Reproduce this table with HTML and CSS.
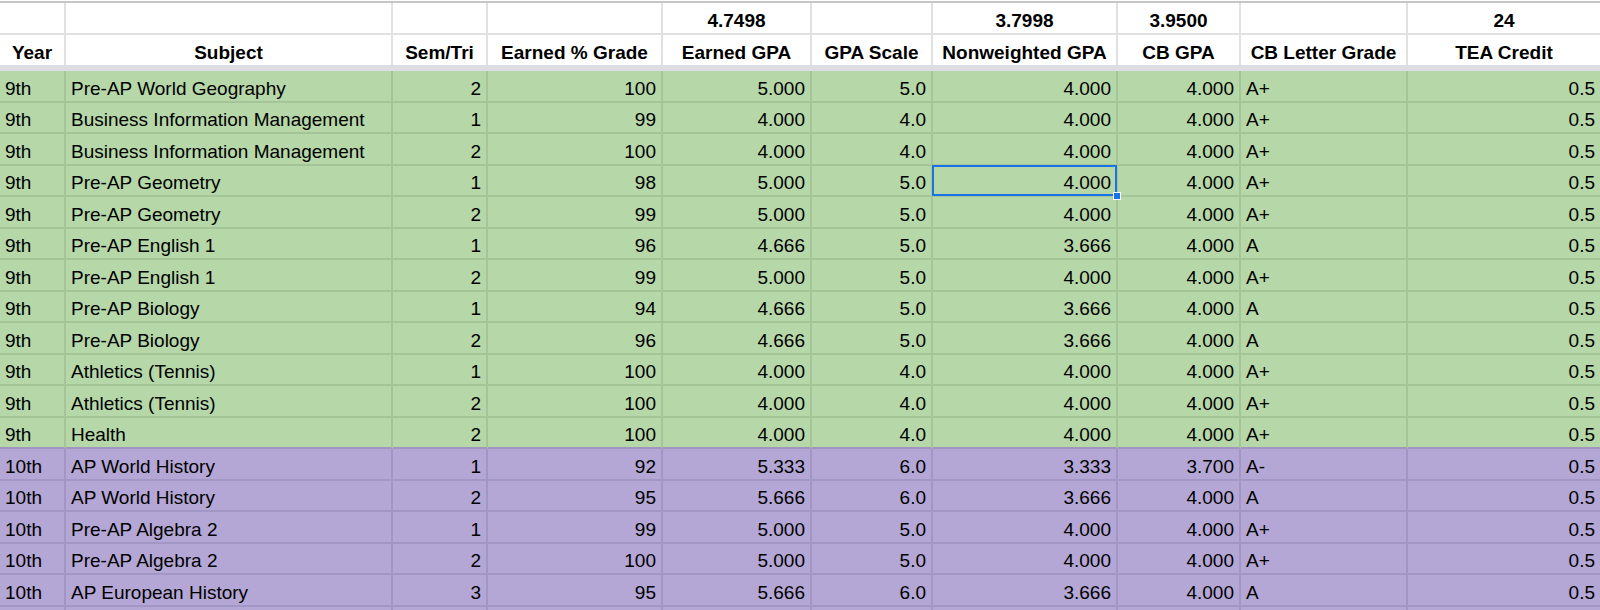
FILE: index.html
```html
<!DOCTYPE html>
<html lang="en">
<head>
<meta charset="utf-8">
<title>GPA Sheet</title>
<link rel="stylesheet" href="styles.css">
</head>
<body>
<div class="sheet">
  <div class="row hdr hdr-a">
    <div class="c"></div><div class="c"></div><div class="c"></div><div class="c"></div>
    <div class="c ctr">4.7498</div><div class="c"></div>
    <div class="c ctr">3.7998</div><div class="c ctr">3.9500</div><div class="c"></div>
    <div class="c ctr">24</div>
  </div>
  <div class="row hdr hdr-b">
    <div class="c ctr">Year</div><div class="c ctr">Subject</div><div class="c ctr">Sem/Tri</div>
    <div class="c ctr">Earned % Grade</div><div class="c ctr">Earned GPA</div><div class="c ctr">GPA Scale</div>
    <div class="c ctr">Nonweighted GPA</div><div class="c ctr">CB GPA</div><div class="c ctr">CB Letter Grade</div>
    <div class="c ctr">TEA Credit</div>
  </div>
  <div class="freeze"></div>

  <div class="row g"><div class="c">9th</div><div class="c">Pre-AP World Geography</div><div class="c r">2</div><div class="c r">100</div><div class="c r">5.000</div><div class="c r">5.0</div><div class="c r">4.000</div><div class="c r">4.000</div><div class="c">A+</div><div class="c r">0.5</div></div>
  <div class="row g"><div class="c">9th</div><div class="c">Business Information Management</div><div class="c r">1</div><div class="c r">99</div><div class="c r">4.000</div><div class="c r">4.0</div><div class="c r">4.000</div><div class="c r">4.000</div><div class="c">A+</div><div class="c r">0.5</div></div>
  <div class="row g"><div class="c">9th</div><div class="c">Business Information Management</div><div class="c r">2</div><div class="c r">100</div><div class="c r">4.000</div><div class="c r">4.0</div><div class="c r">4.000</div><div class="c r">4.000</div><div class="c">A+</div><div class="c r">0.5</div></div>
  <div class="row g"><div class="c">9th</div><div class="c">Pre-AP Geometry</div><div class="c r">1</div><div class="c r">98</div><div class="c r">5.000</div><div class="c r">5.0</div><div class="c r sel">4.000<span class="handle"></span></div><div class="c r">4.000</div><div class="c">A+</div><div class="c r">0.5</div></div>
  <div class="row g"><div class="c">9th</div><div class="c">Pre-AP Geometry</div><div class="c r">2</div><div class="c r">99</div><div class="c r">5.000</div><div class="c r">5.0</div><div class="c r">4.000</div><div class="c r">4.000</div><div class="c">A+</div><div class="c r">0.5</div></div>
  <div class="row g"><div class="c">9th</div><div class="c">Pre-AP English 1</div><div class="c r">1</div><div class="c r">96</div><div class="c r">4.666</div><div class="c r">5.0</div><div class="c r">3.666</div><div class="c r">4.000</div><div class="c">A</div><div class="c r">0.5</div></div>
  <div class="row g"><div class="c">9th</div><div class="c">Pre-AP English 1</div><div class="c r">2</div><div class="c r">99</div><div class="c r">5.000</div><div class="c r">5.0</div><div class="c r">4.000</div><div class="c r">4.000</div><div class="c">A+</div><div class="c r">0.5</div></div>
  <div class="row g"><div class="c">9th</div><div class="c">Pre-AP Biology</div><div class="c r">1</div><div class="c r">94</div><div class="c r">4.666</div><div class="c r">5.0</div><div class="c r">3.666</div><div class="c r">4.000</div><div class="c">A</div><div class="c r">0.5</div></div>
  <div class="row g"><div class="c">9th</div><div class="c">Pre-AP Biology</div><div class="c r">2</div><div class="c r">96</div><div class="c r">4.666</div><div class="c r">5.0</div><div class="c r">3.666</div><div class="c r">4.000</div><div class="c">A</div><div class="c r">0.5</div></div>
  <div class="row g"><div class="c">9th</div><div class="c">Athletics (Tennis)</div><div class="c r">1</div><div class="c r">100</div><div class="c r">4.000</div><div class="c r">4.0</div><div class="c r">4.000</div><div class="c r">4.000</div><div class="c">A+</div><div class="c r">0.5</div></div>
  <div class="row g"><div class="c">9th</div><div class="c">Athletics (Tennis)</div><div class="c r">2</div><div class="c r">100</div><div class="c r">4.000</div><div class="c r">4.0</div><div class="c r">4.000</div><div class="c r">4.000</div><div class="c">A+</div><div class="c r">0.5</div></div>
  <div class="row g last"><div class="c">9th</div><div class="c">Health</div><div class="c r">2</div><div class="c r">100</div><div class="c r">4.000</div><div class="c r">4.0</div><div class="c r">4.000</div><div class="c r">4.000</div><div class="c">A+</div><div class="c r">0.5</div></div>

  <div class="row p"><div class="c">10th</div><div class="c">AP World History</div><div class="c r">1</div><div class="c r">92</div><div class="c r">5.333</div><div class="c r">6.0</div><div class="c r">3.333</div><div class="c r">3.700</div><div class="c">A-</div><div class="c r">0.5</div></div>
  <div class="row p"><div class="c">10th</div><div class="c">AP World History</div><div class="c r">2</div><div class="c r">95</div><div class="c r">5.666</div><div class="c r">6.0</div><div class="c r">3.666</div><div class="c r">4.000</div><div class="c">A</div><div class="c r">0.5</div></div>
  <div class="row p"><div class="c">10th</div><div class="c">Pre-AP Algebra 2</div><div class="c r">1</div><div class="c r">99</div><div class="c r">5.000</div><div class="c r">5.0</div><div class="c r">4.000</div><div class="c r">4.000</div><div class="c">A+</div><div class="c r">0.5</div></div>
  <div class="row p"><div class="c">10th</div><div class="c">Pre-AP Algebra 2</div><div class="c r">2</div><div class="c r">100</div><div class="c r">5.000</div><div class="c r">5.0</div><div class="c r">4.000</div><div class="c r">4.000</div><div class="c">A+</div><div class="c r">0.5</div></div>
  <div class="row p"><div class="c">10th</div><div class="c">AP European History</div><div class="c r">3</div><div class="c r">95</div><div class="c r">5.666</div><div class="c r">6.0</div><div class="c r">3.666</div><div class="c r">4.000</div><div class="c">A</div><div class="c r">0.5</div></div>
  <div class="row p"><div class="c"></div><div class="c"></div><div class="c"></div><div class="c"></div><div class="c"></div><div class="c"></div><div class="c"></div><div class="c"></div><div class="c"></div><div class="c"></div></div>
</div>
</body>
</html>
```

FILE: styles.css
```css
html, body {
  margin: 0;
  padding: 0;
  overflow: hidden;
  background: #ffffff;
}

body {
  font-family: "Liberation Sans", Arial, sans-serif;
  font-size: 19px;
  line-height: 21px;
  color: #000000;
}

.sheet {
  --cols: 66px 327px 95px 175px 149px 121px 185px 123px 167px 194px;
  width: 1602px;
  margin-top: 1px;
  border-top: 2px solid #c6c6c6;
}

.row {
  display: grid;
  grid-template-columns: var(--cols);
  height: 31.5px;
}

.c {
  box-sizing: border-box;
  display: flex;
  align-items: flex-end;
  padding: 0 5px 2px 5px;
  border-right: 2px solid #e1e1e1;
  border-bottom: 2px solid #e1e1e1;
  white-space: nowrap;
  overflow: hidden;
  min-width: 0;
}

.c.r { justify-content: flex-end; }
.c.ctr { justify-content: center; }

.hdr { background: #ffffff; font-weight: bold; }
.hdr-a { height: 32px; }
.hdr-b { height: 30px; }
.hdr-b .c { border-bottom: none; }

.freeze {
  height: 6px;
  background: #dcdee3;
}

.g { background: #b6d7a8; }
.g .c { border-color: #a5c497; }
.g.last .c { border-bottom-color: #9f95c0; }

.p { background: #b4a7d6; }
.p .c { border-color: #a296c4; }

.sel {
  position: relative;
  overflow: visible;
  z-index: 2;
}

.sel::after {
  content: "";
  position: absolute;
  left: -1px;
  top: -1px;
  right: -1px;
  bottom: -1px;
  border: 2px solid #1a73e8;
  pointer-events: none;
}

.handle {
  position: absolute;
  right: -5px;
  bottom: -5px;
  width: 6px;
  height: 6px;
  background: #1a73e8;
  border: 1px solid #ffffff;
  z-index: 3;
}
```
